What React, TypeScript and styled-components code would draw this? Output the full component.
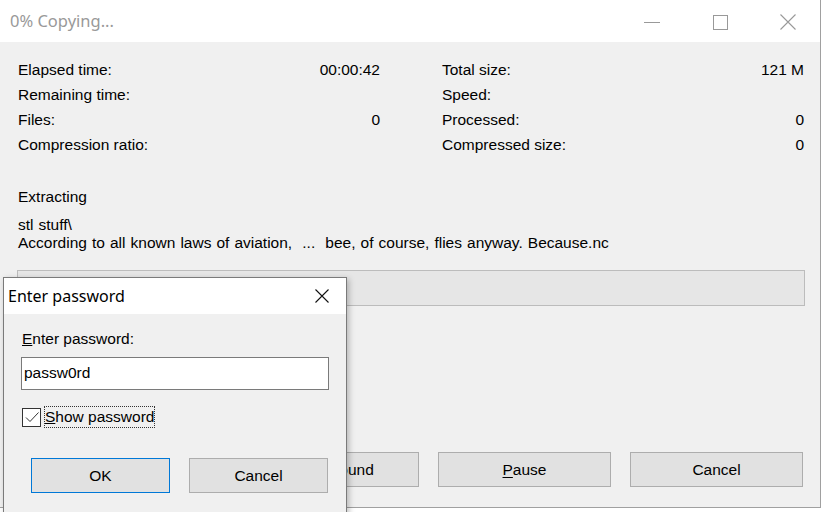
import styled, { createGlobalStyle } from "styled-components";

const GlobalStyle = createGlobalStyle`
  html, body {
    margin: 0;
    padding: 0;
    background: #ffffff;
    overflow: hidden;
  }
  * { box-sizing: border-box; }
`;

const stats = [
  { left: "Elapsed time:", leftValue: "00:00:42", right: "Total size:", rightValue: "121 M" },
  { left: "Remaining time:", leftValue: "", right: "Speed:", rightValue: "" },
  { left: "Files:", leftValue: "0", right: "Processed:", rightValue: "0" },
  { left: "Compression ratio:", leftValue: "", right: "Compressed size:", rightValue: "0" },
];

export default function App() {
  return (
    <>
      <GlobalStyle />
      <Desktop>
        <Window>
          <TitleBar>
            <Title>0% Copying...</Title>
            <Controls>
              <ControlButton>
                <svg width="16" height="16" viewBox="0 0 16 16">
                  <line x1="0" y1="8.5" x2="16" y2="8.5" stroke="#999" strokeWidth="1" />
                </svg>
              </ControlButton>
              <ControlButton>
                <svg width="16" height="16" viewBox="0 0 16 16">
                  <rect x="1.5" y="1.5" width="14" height="14" fill="none" stroke="#999" strokeWidth="1" />
                </svg>
              </ControlButton>
              <ControlButton>
                <svg width="16" height="16" viewBox="0 0 16 16">
                  <path d="M0.5 0.5 L15.5 15.5 M15.5 0.5 L0.5 15.5" stroke="#999" strokeWidth="1.1" fill="none" />
                </svg>
              </ControlButton>
            </Controls>
          </TitleBar>

          <Body>
            <StatsGrid>
              {stats.map((s) => (
                <>
                  <StatRow key={s.left}>
                    <span>{s.left}</span>
                    <span>{s.leftValue}</span>
                  </StatRow>
                  <StatRow key={s.right}>
                    <span>{s.right}</span>
                    <span>{s.rightValue}</span>
                  </StatRow>
                </>
              ))}
            </StatsGrid>

            <Operation>Extracting</Operation>
            <FileBlock>
              <TextLine>stl stuff\</TextLine>
              <TextLine>According to all known laws of aviation,  ...  bee, of course, flies anyway. Because.nc</TextLine>
            </FileBlock>

            <Progress />

            <ButtonRow>
              <Button>Background</Button>
              <Button>
                <u>P</u>ause
              </Button>
              <Button>Cancel</Button>
            </ButtonRow>
          </Body>
        </Window>

        <Dialog>
          <DialogTitleBar>
            <DialogTitle>Enter password</DialogTitle>
            <DialogClose>
              <svg width="16" height="16" viewBox="0 0 16 16">
                <path d="M1.5 1.5 L14.5 14.5 M14.5 1.5 L1.5 14.5" stroke="#111" strokeWidth="1.1" fill="none" />
              </svg>
            </DialogClose>
          </DialogTitleBar>
          <DialogBody>
            <FieldLabel>
              <u>E</u>nter password:
            </FieldLabel>
            <PasswordInput>passw0rd</PasswordInput>
            <CheckRow>
              <CheckBox>
                <svg width="16" height="16" viewBox="0 0 16 16">
                  <path d="M2 8.5 L6 12.5 L14.5 3.5" stroke="#333" strokeWidth="1" fill="none" />
                </svg>
              </CheckBox>
              <CheckLabel>
                <u>S</u>how password
              </CheckLabel>
            </CheckRow>
            <DialogButtons>
              <Button $primary $width={139}>OK</Button>
              <Button $width={139}>Cancel</Button>
            </DialogButtons>
          </DialogBody>
        </Dialog>
      </Desktop>
    </>
  );
}

const Desktop = styled.div`
  position: relative;
  width: 824px;
  height: 512px;
  overflow: hidden;
  background: #ffffff;
  font-family: "Liberation Sans", Arial, sans-serif;
  font-size: 15.5px;
  color: #000;
`;

const Window = styled.div`
  width: 821px;
  height: 508px;
  display: flex;
  flex-direction: column;
  border-right: 1px solid #a0a0a0;
  border-bottom: 1px solid #a0a0a0;
`;

const TitleBar = styled.div`
  height: 42px;
  flex: none;
  background: #ffffff;
  display: flex;
  align-items: center;
  padding-left: 10px;
`;

const Title = styled.div`
  font-family: "Noto Sans", "Open Sans", sans-serif;
  font-size: 16.5px;
  color: #999999;
  flex: 1;
  margin-top: -2px;
`;

const Controls = styled.div`
  display: flex;
  height: 100%;
  padding-top: 1px;
`;

const ControlButton = styled.div`
  width: 68px;
  height: 100%;
  display: flex;
  align-items: center;
  justify-content: center;
  padding-left: 3px;
`;

const Body = styled.div`
  flex: 1;
  background: #f0f0f0;
  display: flex;
  flex-direction: column;
  padding: 15px 17px 20px 18px;
`;

const StatsGrid = styled.div`
  display: grid;
  grid-template-columns: 362px 362px;
  column-gap: 62px;
`;

const StatRow = styled.div`
  display: flex;
  justify-content: space-between;
  height: 25px;
  line-height: 25px;
  white-space: nowrap;
`;

const Operation = styled.div`
  margin-top: 31px;
  line-height: 18px;
`;

const FileBlock = styled.div`
  margin-top: 10px;
`;

const TextLine = styled.div`
  line-height: 18px;
  white-space: pre;
  word-spacing: 0.75px;
`;

const Progress = styled.div`
  margin: 18px 0 0 -1px;
  width: 788px;
  height: 36px;
  background: #e6e6e6;
  border: 1px solid #bcbcbc;
`;

const ButtonRow = styled.div`
  margin-top: auto;
  display: flex;
  justify-content: flex-end;
  gap: 19px;
`;

const Button = styled.div<{ $primary?: boolean; $width?: number }>`
  width: ${(p) => p.$width ?? 173}px;
  height: 35px;
  display: flex;
  align-items: center;
  justify-content: center;
  background: #e1e1e1;
  border: 1px solid ${(p) => (p.$primary ? "#0078d7" : "#adadad")};
  font-family: "Liberation Sans", Arial, sans-serif;
  font-size: 15.5px;
  color: #000;
  u {
    text-underline-offset: 2px;
  }
`;

const Dialog = styled.div`
  position: absolute;
  left: 3px;
  top: 277px;
  width: 344px;
  height: 250px;
  display: flex;
  flex-direction: column;
  border: 1px solid #7a7a7a;
  background: #f0f0f0;
  box-shadow: 2px 2px 6px rgba(0, 0, 0, 0.25);
`;

const DialogTitleBar = styled.div`
  height: 36px;
  flex: none;
  background: #ffffff;
  display: flex;
  align-items: center;
  padding-left: 4px;
`;

const DialogTitle = styled.div`
  flex: 1;
  font-family: "Noto Sans", "Open Sans", sans-serif;
  font-size: 16px;
  color: #000;
  margin-top: -1px;
`;

const DialogClose = styled.div`
  width: 44px;
  height: 100%;
  display: flex;
  align-items: center;
  justify-content: center;
  margin-right: 2px;
`;

const DialogBody = styled.div`
  display: flex;
  flex-direction: column;
  padding: 16px 0 0 17px;
`;

const FieldLabel = styled.div`
  line-height: 18px;
  padding-left: 1px;
`;

const PasswordInput = styled.div`
  margin-top: 9px;
  width: 308px;
  height: 33px;
  background: #ffffff;
  border: 1px solid #7a7a7a;
  padding-left: 2px;
  line-height: 29px;
`;

const CheckRow = styled.div`
  margin-top: 16px;
  display: flex;
  align-items: center;
  gap: 3px;
  padding-left: 1px;
`;

const CheckBox = styled.div`
  width: 19px;
  height: 19px;
  border: 1px solid #333333;
  background: #ffffff;
  display: flex;
  align-items: center;
  justify-content: center;
`;

const CheckLabel = styled.div`
  border: 1px dotted #333;
  padding: 1px 0 2px 0;
  line-height: 17px;
`;

const DialogButtons = styled.div`
  margin-top: 30px;
  padding-left: 10px;
  display: flex;
  gap: 19px;
`;
